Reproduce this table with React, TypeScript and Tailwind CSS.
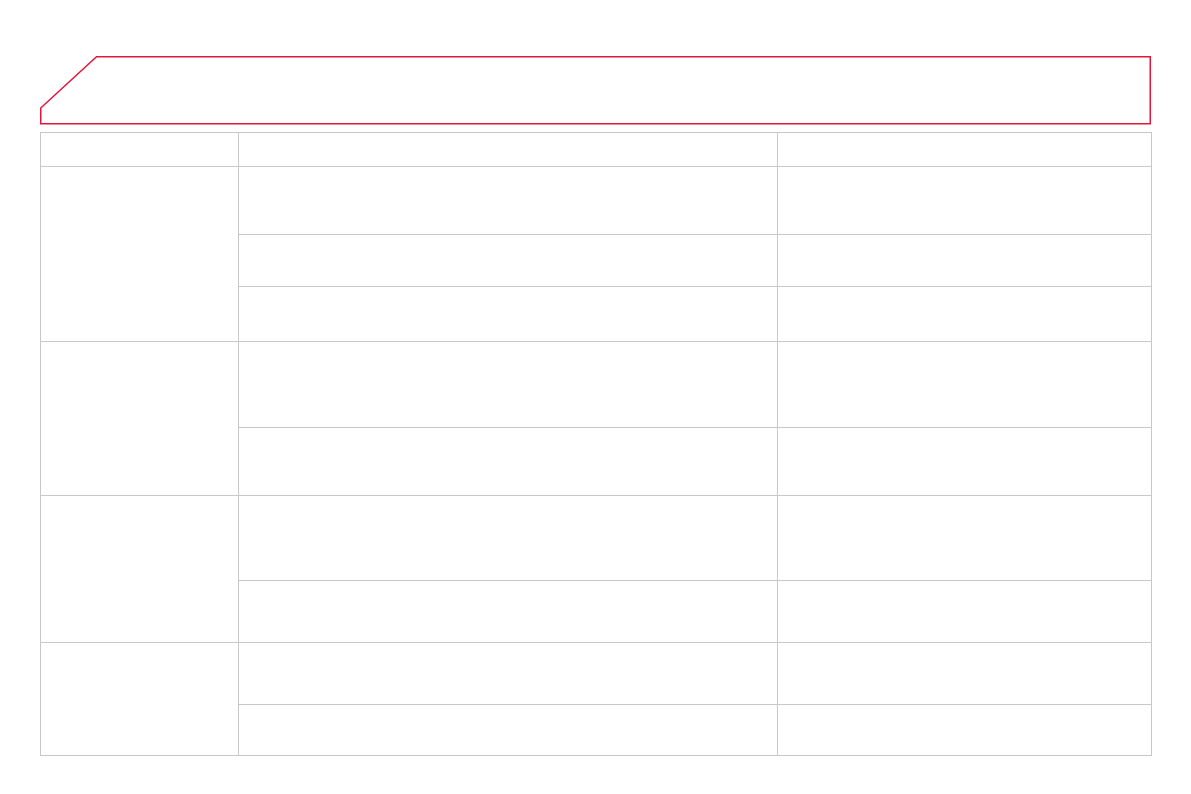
import React from 'react';

type Group = { rows: number[] };

// row heights measured from the reference, grouped by the merged first column
const groups: Group[] = [
  { rows: [68, 52, 55] },
  { rows: [86, 68] },
  { rows: [85, 62] },
  { rows: [62, 51] },
];

const cell = 'border border-[#c8c8c8] p-0';

const App = () => {
  return (
    <div className="min-h-screen w-full bg-white font-['Liberation_Sans',sans-serif]">
      <div className="w-[1112px] ml-[40px] pt-[56px]">
        {/* chamfered title frame */}
        <div className="relative h-[69px] w-[1112px]">
          <svg className="absolute inset-0" width="1112" height="69" viewBox="0 0 1112 69" fill="none">
            <path
              d="M0.75 52 L56.5 0.75 L1110.25 0.75 L1110.25 67.75 L0.75 67.75 Z"
              stroke="#e2163c"
              strokeWidth="1.5"
              strokeLinejoin="miter"
            />
          </svg>
        </div>

        <table className="mt-[7px] w-[1111px] border-collapse table-fixed">
          <colgroup>
            <col className="w-[198px]" />
            <col className="w-[539px]" />
            <col className="w-[374px]" />
          </colgroup>
          <tbody>
            <tr className="h-[34px]">
              <td className={cell}></td>
              <td className={cell}></td>
              <td className={cell}></td>
            </tr>
            {groups.map((g, gi) =>
              g.rows.map((h, ri) => (
                <tr key={`${gi}-${ri}`} style={{ height: h }}>
                  {ri === 0 && <td className={cell} rowSpan={g.rows.length}></td>}
                  <td className={cell}></td>
                  <td className={cell}></td>
                </tr>
              ))
            )}
          </tbody>
        </table>
      </div>
    </div>
  );
};

export default App;
